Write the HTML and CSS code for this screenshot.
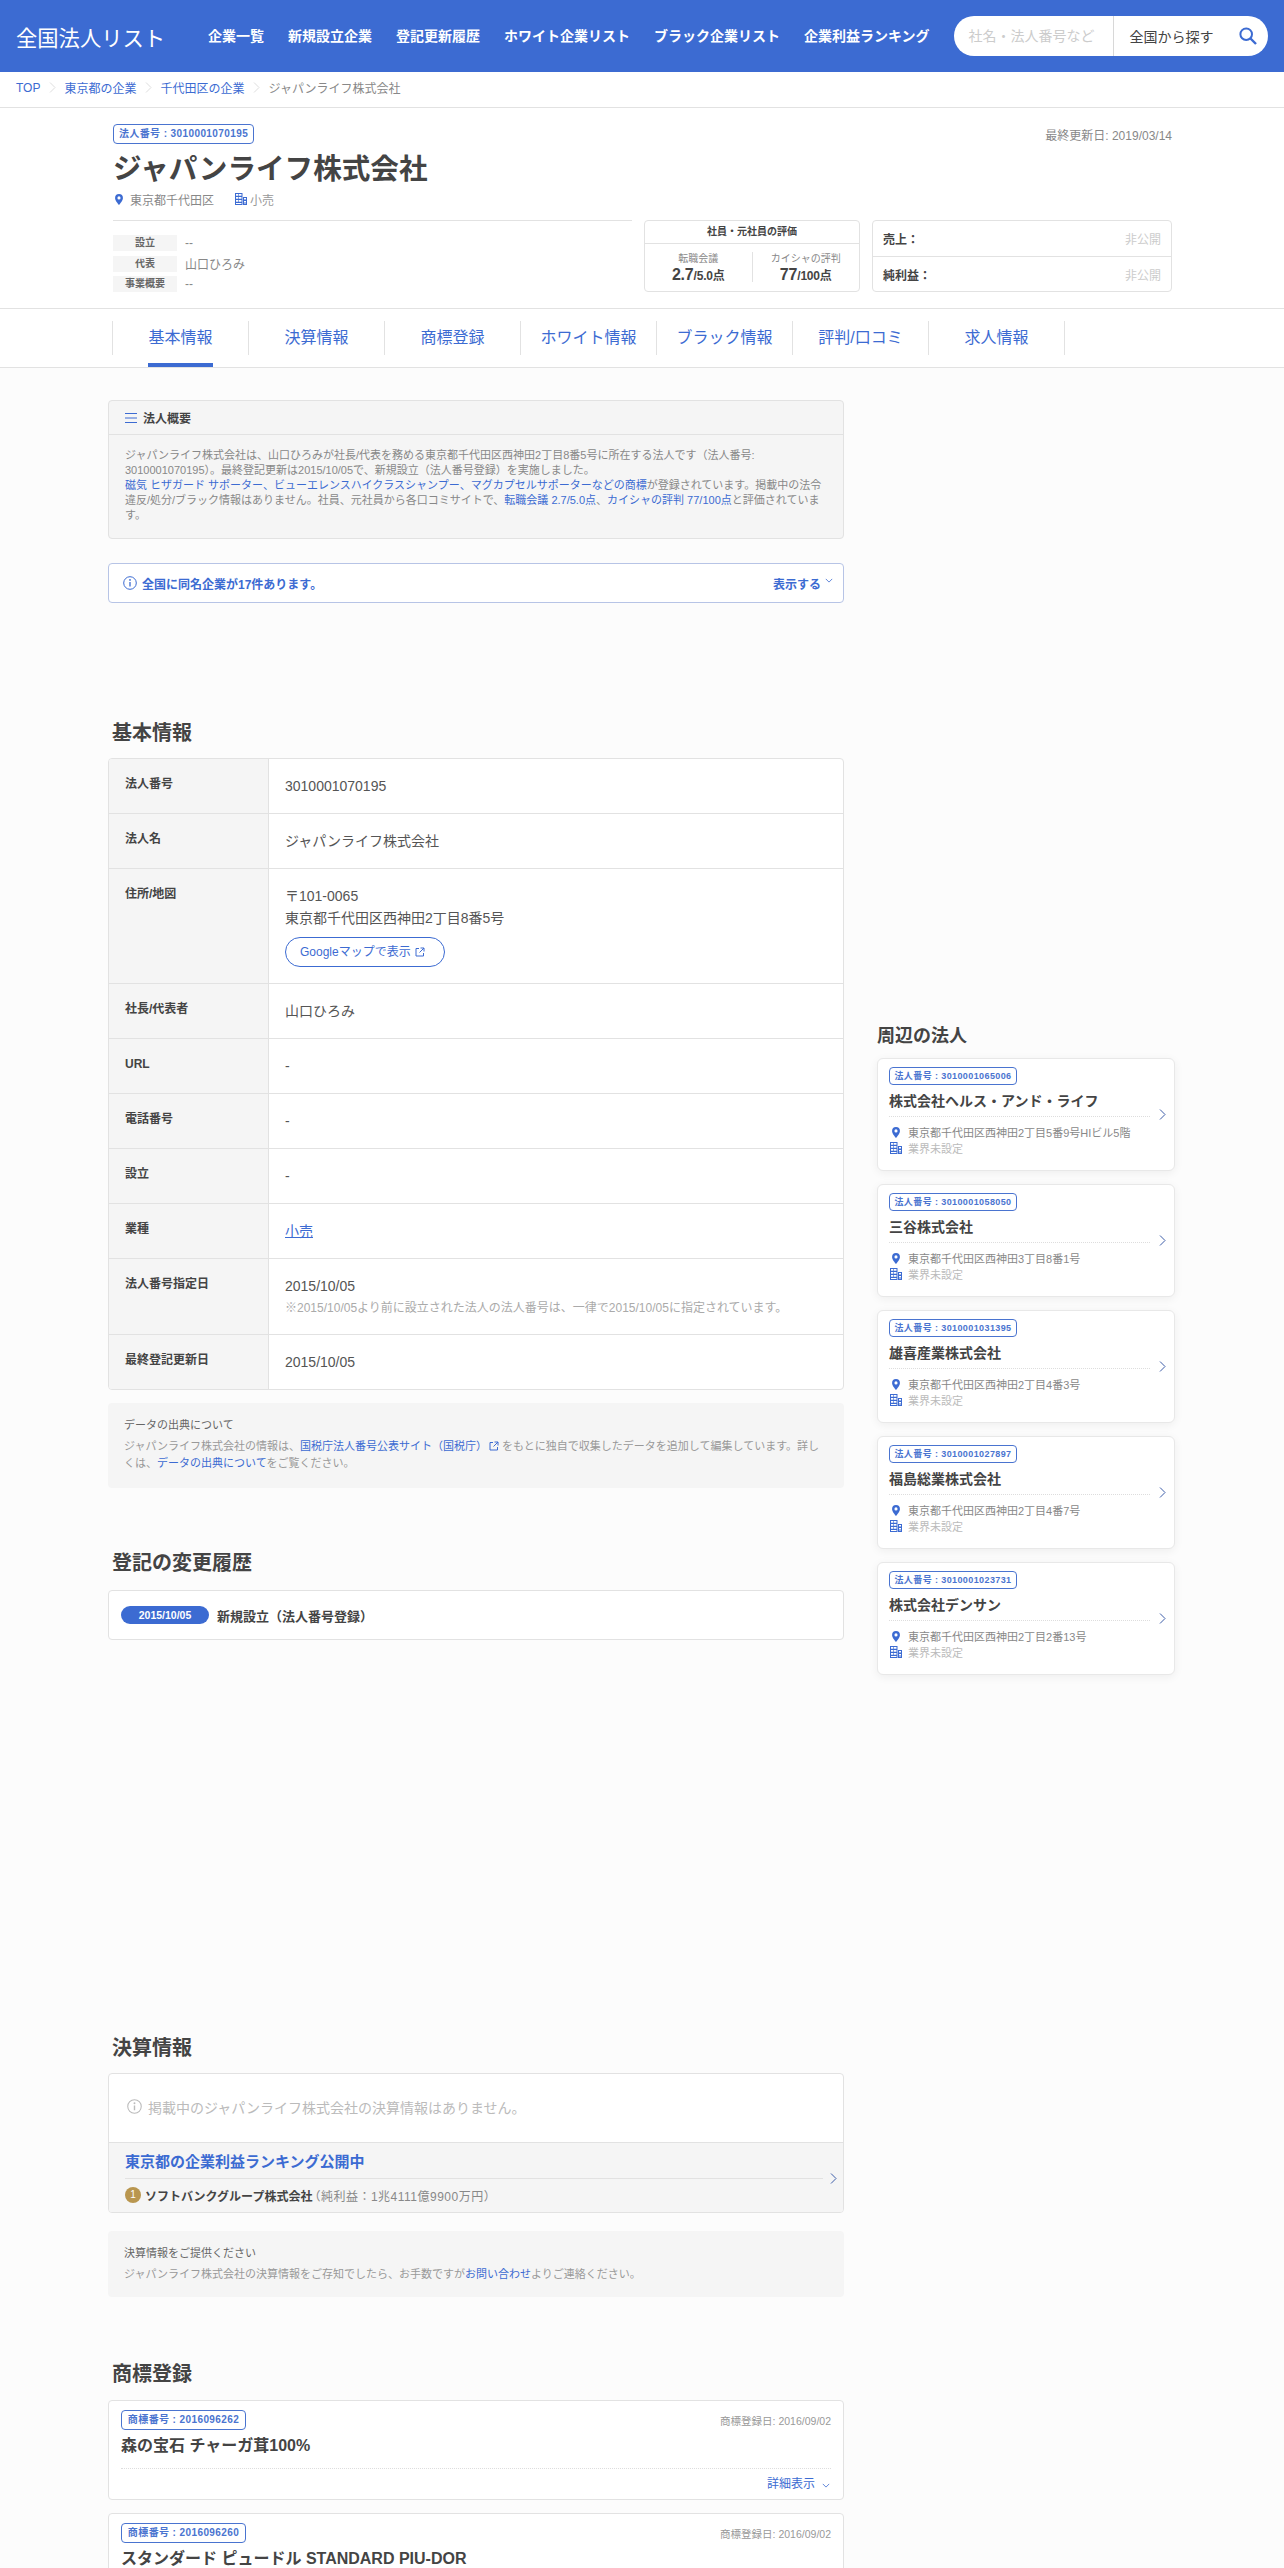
FILE: index.html
```html
<!DOCTYPE html>
<html lang="ja">
<head>
<meta charset="utf-8">
<title>ジャパンライフ株式会社 | 全国法人リスト</title>
<link rel="stylesheet" href="styles.css">
</head>
<body>
<svg class="sprite" aria-hidden="true">
  <symbol id="pin" viewBox="0 0 10 14"><path fill-rule="evenodd" d="M5 0a5 5 0 0 1 5 5c0 3.400-3.600 7-5 9-1.400-2-5-5.600-5-9a5 5 0 0 1 5-5zm0 3a2 2 0 1 0 0 4 2 2 0 0 0 0-4z"/></symbol>
  <symbol id="bld" viewBox="0 0 12 12"><path fill-rule="evenodd" d="M0 0h7.500v12H0zM1 1v1.800h2.400V1zm3 0v1.800h2.500V1zM1 4v1.800h2.400V4zm3 0v1.800h2.500V4zM1 7v1.800h2.400V7zm3 0v1.800h2.500V7zM1 10v1h5.500v-1z"/><path fill-rule="evenodd" d="M8 4h4v8H8zm1 1v1.500h2V5zm0 3v1.500h2V8zm0 2.500v.6h2v-.6z"/></symbol>
  <symbol id="chev" viewBox="0 0 7 11"><path d="M1 .5l5 5-5 5" fill="none" stroke="currentColor" stroke-width="1"/></symbol>
  <symbol id="down" viewBox="0 0 10 6"><path d="M1 1l4 4 4-4" fill="none" stroke="currentColor" stroke-width="1"/></symbol>
  <symbol id="info" viewBox="0 0 14 14"><circle cx="7" cy="7" r="6.300" fill="none" stroke="currentColor" stroke-width="1"/><path d="M7 6v4.500" stroke="currentColor" stroke-width="1.300"/><circle cx="7" cy="3.900" r=".9" fill="currentColor"/></symbol>
  <symbol id="ext" viewBox="0 0 10 10"><path d="M4 1.500H1v7.500h7.500V6M5.500 1h3.500v3.500M9 1L4.500 5.500" fill="none" stroke="currentColor" stroke-width="1"/></symbol>
</svg>

<header class="site-header">
  <a class="logo">全国法人リスト</a>
  <nav class="gnav">
    <a>企業一覧</a><a>新規設立企業</a><a>登記更新履歴</a><a>ホワイト企業リスト</a><a>ブラック企業リスト</a><a>企業利益ランキング</a>
  </nav>
  <div class="search">
    <span class="search-input">社名・法人番号など</span>
    <span class="search-area">全国から探す</span>
    <svg class="search-icon" viewBox="0 0 18 18"><circle cx="7.200" cy="7.200" r="5.800" fill="none" stroke="currentColor" stroke-width="2"/><path d="M11.500 11.500l5.500 5.500" stroke="currentColor" stroke-width="2.400"/></svg>
  </div>
</header>

<nav class="crumbs">
  <a>TOP</a><svg class="crumb-sep"><use href="#chev"/></svg>
  <a>東京都の企業</a><svg class="crumb-sep"><use href="#chev"/></svg>
  <a>千代田区の企業</a><svg class="crumb-sep"><use href="#chev"/></svg>
  <span>ジャパンライフ株式会社</span>
</nav>

<section class="company">
  <div class="company-top">
    <span class="badge badge-lg">法人番号 : 3010001070195</span>
    <span class="updated">最終更新日: 2019/03/14</span>
  </div>
  <h1 class="company-name">ジャパンライフ株式会社</h1>
  <div class="company-meta">
    <svg class="ic-pin"><use href="#pin"/></svg><span class="meta-place">東京都千代田区</span>
    <svg class="ic-bld"><use href="#bld"/></svg><span class="meta-ind">小売</span>
  </div>
  <div class="company-bottom">
    <dl class="facts">
      <div class="fact"><dt>設立</dt><dd>--</dd></div>
      <div class="fact"><dt>代表</dt><dd>山口ひろみ</dd></div>
      <div class="fact"><dt>事業概要</dt><dd>--</dd></div>
    </dl>
    <div class="rating">
      <div class="rating-head">社員・元社員の評価</div>
      <div class="rating-body">
        <div class="rating-col"><div class="rating-src">転職会議</div><div class="rating-val"><b>2.7</b>/5.0点</div></div>
        <div class="rating-col"><div class="rating-src">カイシャの評判</div><div class="rating-val"><b>77</b>/100点</div></div>
      </div>
    </div>
    <div class="finance">
      <div class="finance-row"><b>売上：</b><span>非公開</span></div>
      <div class="finance-row"><b>純利益：</b><span>非公開</span></div>
    </div>
  </div>
</section>

<nav class="tabs">
  <a class="tab is-active"><span>基本情報</span></a>
  <a class="tab"><span>決算情報</span></a>
  <a class="tab"><span>商標登録</span></a>
  <a class="tab"><span>ホワイト情報</span></a>
  <a class="tab"><span>ブラック情報</span></a>
  <a class="tab"><span>評判/口コミ</span></a>
  <a class="tab"><span>求人情報</span></a>
</nav>

<main class="layout">
  <div class="col-main">
    <section class="summary">
      <h3 class="summary-head"><svg class="ic-menu" viewBox="0 0 12 12"><path d="M0 1.500h12M0 6h12M0 10.500h12" stroke="currentColor" stroke-width="1"/></svg>法人概要</h3>
      <p class="summary-body">ジャパンライフ株式会社は、山口ひろみが社長/代表を務める東京都千代田区西神田2丁目8番5号に所在する法人です（法人番号: 3010001070195）。最終登記更新は2015/10/05で、新規設立（法人番号登録）を実施しました。<br><a>磁気 ヒザガード サポーター、ビューエレンスハイクラスシャンプー、マグカプセルサポーターなどの商標</a>が登録されています。掲載中の法令違反/処分/ブラック情報はありません。社員、元社員から各口コミサイトで、<a>転職会議 2.7/5.0点</a>、<a>カイシャの評判 77/100点</a>と評価されています。</p>
    </section>

    <div class="same-name">
      <svg class="ic-info"><use href="#info"/></svg>
      <b>全国に同名企業が17件あります。</b>
      <span class="same-more">表示する<svg class="ic-down"><use href="#down"/></svg></span>
    </div>

    <h2 class="sec-title sec-basic">基本情報</h2>
    <div class="table">
      <div class="row"><div class="th">法人番号</div><div class="td">3010001070195</div></div>
      <div class="row"><div class="th">法人名</div><div class="td">ジャパンライフ株式会社</div></div>
      <div class="row"><div class="th">住所/地図</div><div class="td">〒101-0065<br>東京都千代田区西神田2丁目8番5号<a class="map-btn">Googleマップで表示<svg class="ic-ext"><use href="#ext"/></svg></a></div></div>
      <div class="row"><div class="th">社長/代表者</div><div class="td">山口ひろみ</div></div>
      <div class="row"><div class="th">URL</div><div class="td">-</div></div>
      <div class="row"><div class="th">電話番号</div><div class="td">-</div></div>
      <div class="row"><div class="th">設立</div><div class="td">-</div></div>
      <div class="row"><div class="th">業種</div><div class="td"><a class="ul">小売</a></div></div>
      <div class="row row-note"><div class="th">法人番号指定日</div><div class="td">2015/10/05<div class="td-note">※2015/10/05より前に設立された法人の法人番号は、一律で2015/10/05に指定されています。</div></div></div>
      <div class="row"><div class="th">最終登記更新日</div><div class="td">2015/10/05</div></div>
    </div>

    <div class="note note-source">
      <h4>データの出典について</h4>
      <p>ジャパンライフ株式会社の情報は、<a>国税庁法人番号公表サイト（国税庁）<svg class="ic-ext"><use href="#ext"/></svg></a> をもとに独自で収集したデータを追加して編集しています。詳しくは、<a>データの出典について</a>をご覧ください。</p>
    </div>

    <h2 class="sec-title sec-history">登記の変更履歴</h2>
    <div class="card history">
      <span class="pill">2015/10/05</span><b>新規設立（法人番号登録）</b>
    </div>

    <h2 class="sec-title sec-finance">決算情報</h2>
    <div class="card fin">
      <div class="fin-empty"><svg class="ic-info"><use href="#info"/></svg>掲載中のジャパンライフ株式会社の決算情報はありません。</div>
      <div class="fin-rank">
        <a class="fin-rank-title">東京都の企業利益ランキング公開中</a>
        <div class="fin-rank-item"><span class="medal">1</span><b>ソフトバンクグループ株式会社</b><span class="fin-rank-sub">（純利益：1兆4111億9900万円）</span></div>
        <svg class="ic-chev"><use href="#chev"/></svg>
      </div>
    </div>

    <div class="note note-fin">
      <h4>決算情報をご提供ください</h4>
      <p>ジャパンライフ株式会社の決算情報をご存知でしたら、お手数ですが<a>お問い合わせ</a>よりご連絡ください。</p>
    </div>

    <h2 class="sec-title sec-tm">商標登録</h2>
    <article class="card tm">
      <div class="tm-top"><span class="badge badge-tm">商標番号 : 2016096262</span><span class="tm-date">商標登録日: 2016/09/02</span></div>
      <h3 class="tm-name">森の宝石 チャーガ茸100%</h3>
      <div class="tm-more"><a>詳細表示<svg class="ic-down"><use href="#down"/></svg></a></div>
    </article>
    <article class="card tm">
      <div class="tm-top"><span class="badge badge-tm">商標番号 : 2016096260</span><span class="tm-date">商標登録日: 2016/09/02</span></div>
      <h3 class="tm-name">スタンダード ピュードル STANDARD PIU-DOR</h3>
      <div class="tm-more"><a>詳細表示<svg class="ic-down"><use href="#down"/></svg></a></div>
    </article>
  </div>

  <aside class="col-side">
    <h2 class="side-title">周辺の法人</h2>
    <article class="near">
      <span class="badge">法人番号 : 3010001065006</span>
      <h3 class="near-name">株式会社ヘルス・アンド・ライフ</h3>
      <div class="near-line"><svg class="ic-pin"><use href="#pin"/></svg>東京都千代田区西神田2丁目5番9号HIビル5階</div>
      <div class="near-line near-ind"><svg class="ic-bld"><use href="#bld"/></svg>業界未設定</div>
      <svg class="ic-chev"><use href="#chev"/></svg>
    </article>
    <article class="near">
      <span class="badge">法人番号 : 3010001058050</span>
      <h3 class="near-name">三谷株式会社</h3>
      <div class="near-line"><svg class="ic-pin"><use href="#pin"/></svg>東京都千代田区西神田3丁目8番1号</div>
      <div class="near-line near-ind"><svg class="ic-bld"><use href="#bld"/></svg>業界未設定</div>
      <svg class="ic-chev"><use href="#chev"/></svg>
    </article>
    <article class="near">
      <span class="badge">法人番号 : 3010001031395</span>
      <h3 class="near-name">雄喜産業株式会社</h3>
      <div class="near-line"><svg class="ic-pin"><use href="#pin"/></svg>東京都千代田区西神田2丁目4番3号</div>
      <div class="near-line near-ind"><svg class="ic-bld"><use href="#bld"/></svg>業界未設定</div>
      <svg class="ic-chev"><use href="#chev"/></svg>
    </article>
    <article class="near">
      <span class="badge">法人番号 : 3010001027897</span>
      <h3 class="near-name">福島総業株式会社</h3>
      <div class="near-line"><svg class="ic-pin"><use href="#pin"/></svg>東京都千代田区西神田2丁目4番7号</div>
      <div class="near-line near-ind"><svg class="ic-bld"><use href="#bld"/></svg>業界未設定</div>
      <svg class="ic-chev"><use href="#chev"/></svg>
    </article>
    <article class="near">
      <span class="badge">法人番号 : 3010001023731</span>
      <h3 class="near-name">株式会社デンサン</h3>
      <div class="near-line"><svg class="ic-pin"><use href="#pin"/></svg>東京都千代田区西神田2丁目2番13号</div>
      <div class="near-line near-ind"><svg class="ic-bld"><use href="#bld"/></svg>業界未設定</div>
      <svg class="ic-chev"><use href="#chev"/></svg>
    </article>
  </aside>
</main>
</body>
</html>
```
FILE: styles.css
```css
* { box-sizing: border-box; }
html, body { margin: 0; padding: 0; overflow: hidden; height: 2568px; }
body {
  background: #fcfcfc;
  color: #444;
  font-family: "Liberation Sans", "Noto Sans CJK JP", sans-serif;
  font-size: 14px;
}
h1, h2, h3, h4, p, dl, dd { margin: 0; }
a { color: #3c6bd2; text-decoration: none; }
.sprite { position: absolute; width: 0; height: 0; }

/* header */
.site-header {
  display: flex;
  align-items: center;
  height: 72px;
  padding: 0 16px;
  background: #3c6bd2;
  color: #fff;
}
.logo {
  width: 149px;
  color: #fff;
  font-size: 21.3px;
  font-weight: 400;
  white-space: nowrap;
}
.gnav { display: flex; gap: 24px; margin: -2px 24px 0 43px; }
.gnav a { color: #fff; font-size: 14px; font-weight: 700; white-space: nowrap; }
.search {
  display: flex;
  align-items: center;
  width: 314px;
  height: 40px;
  border-radius: 20px;
  background: #fff;
}
.search-input {
  width: 160px;
  height: 40px;
  padding-left: 15px;
  border-right: 1px solid #d8d8d8;
  color: #ccc;
  line-height: 40px;
  white-space: nowrap;
}
.search-area { width: 125px; padding-left: 16px; color: #444; white-space: nowrap; }
.search-icon { width: 18px; height: 18px; color: #3c6bd2; }

/* breadcrumb */
.crumbs {
  display: flex;
  align-items: center;
  height: 36px;
  padding: 0 16px 4px;
  border-bottom: 1px solid #e2e2e2;
  background: #fff;
  font-size: 12px;
}
.crumbs span { color: #888; }
.crumb-sep { width: 7px; height: 11px; margin: 0 8.500px; color: #ddd; }

/* company heading */
.company {
  height: 201px;
  padding: 16px 112px 0 113px;
  border-bottom: 1px solid #e2e2e2;
  background: #fff;
}
.company-top { display: flex; justify-content: space-between; align-items: center; }
.updated { color: #888; font-size: 12px; }
.company-name { margin-top: 8px; font-size: 28.6px; line-height: 34px; font-weight: 700; color: #444; }
.company-meta { display: flex; align-items: center; height: 18px; margin-top: 4px; font-size: 12px; }
.ic-pin { width: 8px; height: 11px; fill: #3c6bd2; flex: none; }
.ic-bld { width: 12px; height: 12px; fill: #3c6bd2; flex: none; }
.meta-place { margin-left: 7px; color: #888; }
.company-meta .ic-pin { margin-left: 2px; }
.company-meta .ic-bld { margin-left: 21px; }
.meta-ind { margin-left: 3px; color: #999; }
.company-bottom { display: flex; margin-top: 12px; }
.facts { width: 519px; padding-top: 14px; border-top: 1px solid #e2e2e2; }
.fact { display: flex; align-items: center; height: 16px; margin-bottom: 4.500px; }
.fact dt {
  width: 64px;
  background: #f5f5f5;
  color: #666;
  font-size: 10px;
  font-weight: 700;
  line-height: 16px;
  text-align: center;
}
.fact dd { margin-left: 8px; color: #888; font-size: 12px; }
.rating {
  width: 216px;
  height: 72px;
  margin-left: 12px;
  border: 1px solid #e2e2e2;
  border-radius: 4px;
  background: #fff;
}
.rating-head {
  height: 23px;
  border-bottom: 1px solid #e2e2e2;
  font-size: 10px;
  font-weight: 700;
  line-height: 22px;
  text-align: center;
}
.rating-body { display: flex; padding-top: 8px; }
.rating-col { flex: 1; height: 30px; text-align: center; }
.rating-col + .rating-col { border-left: 1px solid #e2e2e2; }
.rating-src { color: #888; font-size: 10px; line-height: 14px; }
.rating-val { font-size: 12px; font-weight: 700; line-height: 18px; letter-spacing: -.2px; }
.rating-val b { font-size: 16px; }
.finance {
  width: 300px;
  height: 72px;
  margin-left: 12px;
  border: 1px solid #e2e2e2;
  border-radius: 4px;
  background: #fff;
}
.finance-row {
  display: flex;
  justify-content: space-between;
  align-items: center;
  height: 35px;
  padding: 0 10px;
  font-size: 12px;
}
.finance-row + .finance-row { border-top: 1px solid #e2e2e2; }
.finance-row span { color: #ccc; }

/* tabs */
.tabs {
  display: flex;
  padding: 12px 0 12px 112px;
  border-bottom: 1px solid #e2e2e2;
  background: #fff;
}
.tab {
  width: 136px;
  height: 34px;
  border-left: 1px solid #e2e2e2;
  color: #3c6bd2;
  font-size: 16px;
  line-height: 34px;
  text-align: center;
}
.tab:last-child { border-right: 1px solid #e2e2e2; width: 137px; }
.tab span { position: relative; display: inline-block; }
.is-active span::after {
  content: "";
  position: absolute;
  left: 0;
  right: 0;
  bottom: -12px;
  height: 4px;
  background: #3c6bd2;
}

/* layout */
.layout { display: flex; padding: 32px 0 0 108px; gap: 33px; align-items: flex-start; }
.col-main { width: 736px; flex: none; }
.col-side { width: 298px; flex: none; padding-top: 622px; }

/* summary */
.summary { height: 139px; border: 1px solid #e2e2e2; border-radius: 4px; background: #f5f5f5; }
.summary-head {
  display: flex;
  align-items: center;
  height: 34px;
  padding-left: 16px;
  border-bottom: 1px solid #e2e2e2;
  font-size: 12px;
  font-weight: 700;
}
.ic-menu { width: 12px; height: 12px; margin-right: 6px; color: #3c6bd2; }
.summary-body { padding: 13px 16px 0; color: #888; font-size: 11px; line-height: 15px; }

.same-name {
  display: flex;
  align-items: center;
  height: 40px;
  margin-top: 24px;
  padding: 0 10px 0 14px;
  border: 1px solid #b7c4e6;
  border-radius: 4px;
  background: #fff;
  color: #3c6bd2;
  font-size: 12px;
}
.ic-info { width: 14px; height: 14px; margin-right: 5px; flex: none; }
.same-more { display: flex; align-items: center; margin-left: auto; font-weight: 700; }
.ic-down { width: 8px; height: 5px; margin-left: 4px; }
.same-more .ic-down { margin-top: -6px; }

.sec-title { font-size: 20px; line-height: 28px; font-weight: 700; padding-left: 4px; color: #444; margin-bottom: 11px; }
.sec-basic { margin-top: 116px; }
.sec-history { margin-top: 61px; margin-bottom: 13px; }
.sec-finance { margin-top: 394px; }
.sec-tm { margin-top: 63px; margin-bottom: 12px; }

/* table */
.table { border: 1px solid #e2e2e2; border-radius: 4px; background: #fff; overflow: hidden; }
.row { display: flex; }
.row + .row { border-top: 1px solid #e2e2e2; }
.th {
  width: 160px;
  flex: none;
  padding: 16px 0 0 16px;
  border-right: 1px solid #e2e2e2;
  background: #f5f5f5;
  font-size: 12px;
  font-weight: 700;
  line-height: 18px;
  color: #444;
}
.td { flex: 1; padding: 16px 15px 16px 16px; color: #555; line-height: 22px; }
.row-note .td { padding-bottom: 15px; }
.td-note { color: #aaa; font-size: 12px; }
.ul { text-decoration: underline; }
.map-btn {
  display: flex;
  align-items: center;
  width: 160px;
  height: 30px;
  margin-top: 8px;
  padding-left: 14px;
  border: 1px solid #3c6bd2;
  border-radius: 15px;
  font-size: 12px;
}
.ic-ext { width: 10px; height: 10px; margin-left: 4px; color: #3c6bd2; }
.note .ic-ext { margin-left: 2px; vertical-align: -1px; }

/* notes */
.note { padding: 14px 16px 0; border-radius: 4px; background: #f5f5f5; }
.note h4 { color: #666; font-size: 11px; font-weight: 400; line-height: 17px; }
.note p { color: #999; font-size: 11px; line-height: 17px; margin-top: 4px; }
.note-source { height: 85px; margin-top: 13px; }
.note-fin { height: 66px; margin-top: 18px; }

/* cards */
.card { border: 1px solid #e2e2e2; border-radius: 4px; background: #fff; }
.history { display: flex; align-items: center; height: 50px; padding-left: 12px; font-size: 13px; }
.pill {
  width: 88px;
  height: 18px;
  margin-right: 8px;
  border-radius: 9px;
  background: #3c6bd2;
  color: #fff;
  font-size: 10.500px;
  font-weight: 700;
  line-height: 18px;
  text-align: center;
}
.fin { height: 140px; overflow: hidden; }
.fin-empty {
  display: flex;
  align-items: center;
  height: 68px;
  padding: 0 0 3px 18px;
  color: #bbb;
}
.fin-empty .ic-info { width: 15px; height: 15px; margin-right: 6px; }
.fin-rank { position: relative; height: 71px; padding: 9px 0 0 16px; border-top: 1px solid #e2e2e2; background: #f5f5f5; }
.fin-rank-title { display: block; width: 698px; height: 27px; border-bottom: 1px solid #e2e2e2; font-size: 15px; font-weight: 700; line-height: 20px; }
.fin-rank-item { display: flex; align-items: center; height: 32px; font-size: 12px; }
.medal {
  width: 16px;
  height: 16px;
  margin-right: 4px;
  border-radius: 50%;
  background: #b9964f;
  color: #fff;
  font-size: 10px;
  line-height: 16px;
  text-align: center;
}
.fin-rank-sub { color: #888; font-size: 12px; letter-spacing: .5px; margin-left: -4px; }
.ic-chev { position: absolute; color: #3c5ca8; width: 7px; height: 11px; }
.fin-rank .ic-chev { right: 6px; top: 30px; }

/* trademark */
.tm { height: 100px; margin-bottom: 13px; padding: 9px 12px 0; }
.tm-top { display: flex; justify-content: space-between; align-items: center; }
.tm-date { color: #999; font-size: 10.500px; }
.tm-name { height: 33px; margin-top: 6px; border-bottom: 1px dotted #ddd; font-size: 16px; font-weight: 700; line-height: 20px; color: #444; }
.tm-more { margin-top: 6px; text-align: right; font-size: 12px; line-height: 18px; }
.tm-more .ic-down { width: 8px; height: 5px; margin-left: 7px; margin-right: 1px; }

/* badge */
.badge {
  display: inline-block;
  width: 128px;
  height: 18px;
  border: 1px solid #4a74d0;
  border-radius: 4px;
  color: #4a74d0;
  font-size: 9px;
  font-weight: 700;
  letter-spacing: .4px;
  line-height: 16px;
  text-align: center;
  white-space: nowrap;
}
.badge-lg { width: 141px; height: 20px; font-size: 10px; line-height: 18px; }
.badge-tm { width: 125px; height: 20px; font-size: 10px; line-height: 18px; }

/* sidebar */
.side-title { font-size: 18px; line-height: 28px; font-weight: 700; color: #444; margin-bottom: 8px; }
.near {
  position: relative;
  height: 113px;
  margin-bottom: 13px;
  padding: 8px 24px 0 11px;
  border: 1px solid #e8e8e8;
  border-radius: 6px;
  background: #fff;
  box-shadow: 0 2px 10px rgba(0, 0, 0, .06);
}
.near .badge { display: block; }
.near-name {
  height: 27px;
  margin-top: 5px;
  margin-bottom: 7px;
  border-bottom: 1px dotted #ddd;
  font-size: 14px;
  font-weight: 700;
  line-height: 22px;
  color: #444;
}
.near-line { display: flex; align-items: center; height: 16px; color: #888; font-size: 11px; white-space: nowrap; }
.near-line .ic-pin { margin: 0 8px 0 3px; }
.near-line .ic-bld { margin: 0 6px 0 1px; }
.near-ind { color: #bbb; }
.near .ic-chev { right: 8px; top: 50px; }
```
